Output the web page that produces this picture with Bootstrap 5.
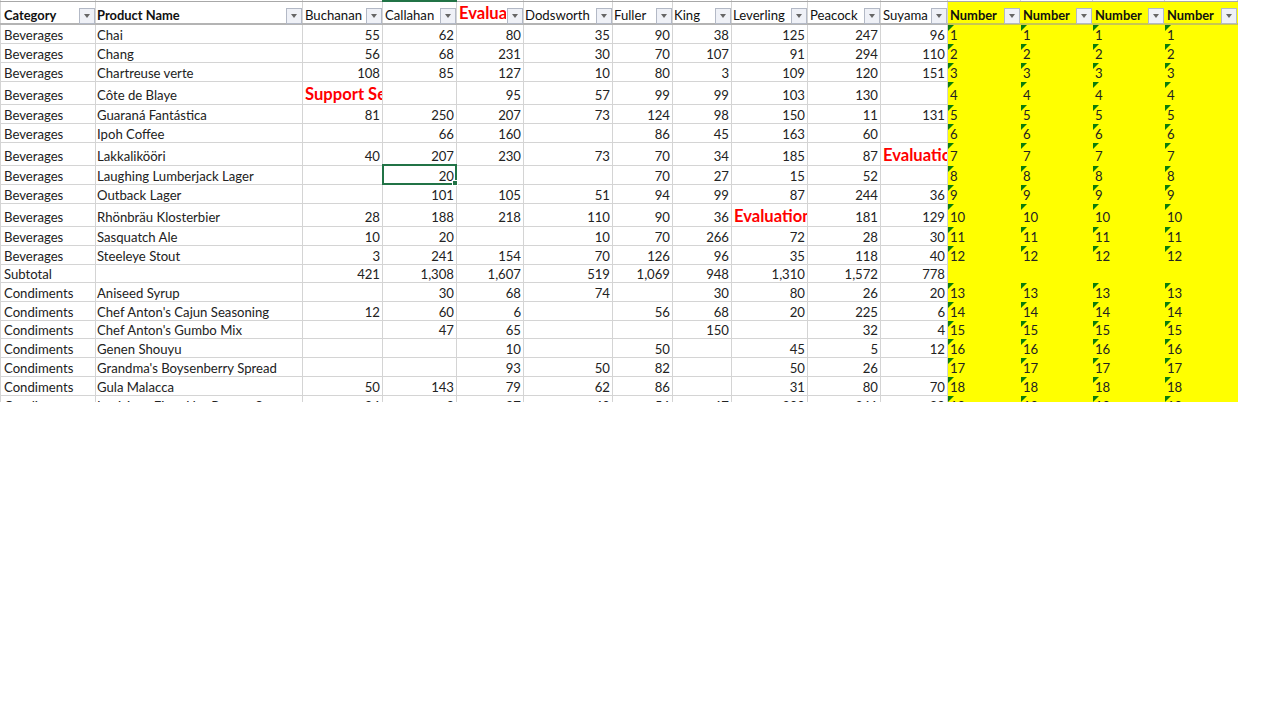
<!DOCTYPE html>
<html lang="en">
<head>
<meta charset="utf-8">
<title>Sheet</title>
<link href="https://cdn.jsdelivr.net/npm/bootstrap@5.3.0/dist/css/bootstrap.min.css" rel="stylesheet">
<style>
body { background: #fff; margin: 0; }
.sheet-clip { width: 1238px; height: 402px; overflow: hidden; position: relative; }
.sheet-grid { table-layout: fixed; border-collapse: collapse; width: 1238px; font-family: Lato, "Liberation Sans", sans-serif; font-size: 13.15px; color: #222; }
.sheet-grid td, .sheet-grid th { border: 1px solid #d4d4d4; padding: 0 2px 0 1px; white-space: nowrap; overflow: hidden; height: 19px; line-height: 16px; vertical-align: bottom; font-weight: 400; position: relative; }
.sheet-grid td:first-child, .sheet-grid th:first-child { padding-left: 3px; }
.sheet-grid .rw-top td { height: 1px; padding: 0; line-height: 0; font-size: 0; border-top: 0; border-bottom-color: #a8a8a8; }
.sheet-grid .rw-tall td { height: 23px; padding-bottom: 1px; }
.sheet-grid .rw-short td { height: 18px; }
.sheet-grid .rw-head th { height: 23px; border-bottom: 2px solid #b4b4b4; padding-top: 5px; padding-right: 18px; color: #111; vertical-align: middle; overflow: visible; }
.sheet-grid .rw-head th:nth-child(3), .sheet-grid .rw-head th:nth-child(4), .sheet-grid .rw-head th:nth-child(10), .sheet-grid .rw-head th:nth-child(11) { padding-left: 2px; }
.hd-clip { display: block; overflow: hidden; }
.sheet-grid .hd-bold { font-weight: 700; font-size: 12.9px; }
.sheet-grid .numc { text-align: right; }
.sheet-grid .yel { background: #ff0; border-color: #ff0; padding-left: 2px; }
.sheet-grid .rw-head th.yel { border-top-color: #a8a8a8; border-bottom-color: #c8c850; padding-left: 2px; }
.sheet-grid td.redt { color: #f00; font-weight: 700; font-size: 16.6px; text-align: left; padding-right: 0; padding-left: 2px; padding-bottom: 2px; }
.sheet-grid th.redt { color: #f00; font-weight: 700; font-size: 16.6px; text-align: left; padding-left: 2px; padding-right: 17px; padding-top: 2px; padding-bottom: 0; }
.flt { position: absolute; right: 0; top: 6px; width: 16px; height: 16px; background: #eff1f7; border: 1px solid #b3b9c6; }
.flt::after { content: ""; position: absolute; left: 4px; top: 5px; border-left: 3.5px solid transparent; border-right: 3.5px solid transparent; border-top: 4px solid #666; }
.tri::before { content: ""; position: absolute; left: 0; top: 0; border-top: 6px solid #0a7d0a; border-right: 6px solid transparent; }
.pick { position: absolute; left: 382px; width: 75px; border: 2px solid #217346; pointer-events: none; }
.pick::after { content: ""; position: absolute; right: -3px; bottom: -3px; width: 6px; height: 6px; background: #217346; border: 1px solid #fff; }
.col-tick { position: absolute; left: 382px; top: 0; width: 75px; height: 2px; background: #217346; }
.sheet-rest { height: 318px; background: #fff; }
</style>
</head>
<body>
<div class="sheet-clip" id="clip">
<table class="sheet-grid" id="g"><colgroup id="cg"></colgroup><tbody id="b"></tbody></table>
<div class="col-tick"></div>
</div>
<div class="sheet-rest"></div>
<script>
const w=[95,207,80,74,67,89,60,59,76,73,67,73,72,72,73];
document.getElementById('cg').innerHTML=w.map(x=>`<col style="width:${x}px">`).join('');
const B='Beverages',C='Condiments';
const R=[
[B,'Chai',55,62,80,35,90,38,125,247,96,1],
[B,'Chang',56,68,231,30,70,107,91,294,110,2],
[B,'Chartreuse verte',108,85,127,10,80,3,109,120,151,3],
[B,'Côte de Blaye','!Support Services','',95,57,99,99,103,130,'',4,'rw-tall'],
[B,'Guaraná Fantástica',81,250,207,73,124,98,150,11,131,5],
[B,'Ipoh Coffee','',66,160,'',86,45,163,60,'',6],
[B,'Lakkalikööri',40,207,230,73,70,34,185,87,'!Evaluation',7,'rw-tall'],
[B,'Laughing Lumberjack Lager','',20,'','',70,27,15,52,'',8],
[B,'Outback Lager','',101,105,51,94,99,87,244,36,9],
[B,'Rhönbräu Klosterbier',28,188,218,110,90,36,'!Evaluation',181,129,10,'rw-tall'],
[B,'Sasquatch Ale',10,20,'',10,70,266,72,28,30,11],
[B,'Steeleye Stout',3,241,154,70,126,96,35,118,40,12],
['Subtotal','','421','1,308','1,607',519,'1,069',948,'1,310','1,572',778,'','rw-short'],
[C,'Aniseed Syrup','',30,68,74,'',30,80,26,20,13],
[C,"Chef Anton's Cajun Seasoning",12,60,6,'',56,68,20,225,6,14],
[C,"Chef Anton's Gumbo Mix",'',47,65,'','',150,'',32,4,15,'rw-short'],
[C,'Genen Shouyu','','',10,'',50,'',45,5,12,16],
[C,"Grandma's Boysenberry Spread",'','',93,50,82,'',50,26,'',17],
[C,'Gula Malacca',50,143,79,62,86,'',31,80,70,18],
[C,'Louisiana Fiery Hot Pepper Sauce',84,8,87,40,56,67,200,261,89,19]
];
const H=['Category','Product Name','Buchanan','Callahan','!Evaluation','Dodsworth','Fuller','King','Leverling','Peacock','Suyama','Number','Number','Number','Number'];
let h='<tr class="rw-top">'+H.map(()=>'<td></td>').join('')+'</tr>';
h+='<tr class="rw-head">'+H.map((t,i)=>{
 const red=t[0]=='!',bold=i<2||i>10;
 return `<th class="${red?'redt':''} ${bold?'hd-bold':''} ${i>10?'yel':''}"><span class="hd-clip">${red?t.slice(1):t}</span><span class="flt"></span></th>`}).join('')+'</tr>';
for(const r of R){
 let s=`<tr class="${r[12]||''}">`;
 for(let i=0;i<11;i++){
  const v=r[i];
  if(typeof v=='string'&&v[0]=='!') s+=`<td class="redt">${v.slice(1)}</td>`;
  else s+=`<td class="${i>1?'numc':''}">${v}</td>`;
 }
 const n=r[11];
 for(let j=0;j<4;j++) s+=`<td class="yel ${n!==''?'tri':''}">${n}</td>`;
 h+=s+'</tr>';
}
document.getElementById('b').innerHTML=h;
const rows=document.querySelectorAll('#b tr');
const t=rows[9].getBoundingClientRect();
const p=document.createElement('div');p.className='pick';p.style.top=(t.top-1)+'px';p.style.height=(t.height+2)+'px';
document.getElementById('clip').appendChild(p);
</script>
<script src="https://cdn.jsdelivr.net/npm/bootstrap@5.3.0/dist/js/bootstrap.bundle.min.js"></script>
</body>
</html>
